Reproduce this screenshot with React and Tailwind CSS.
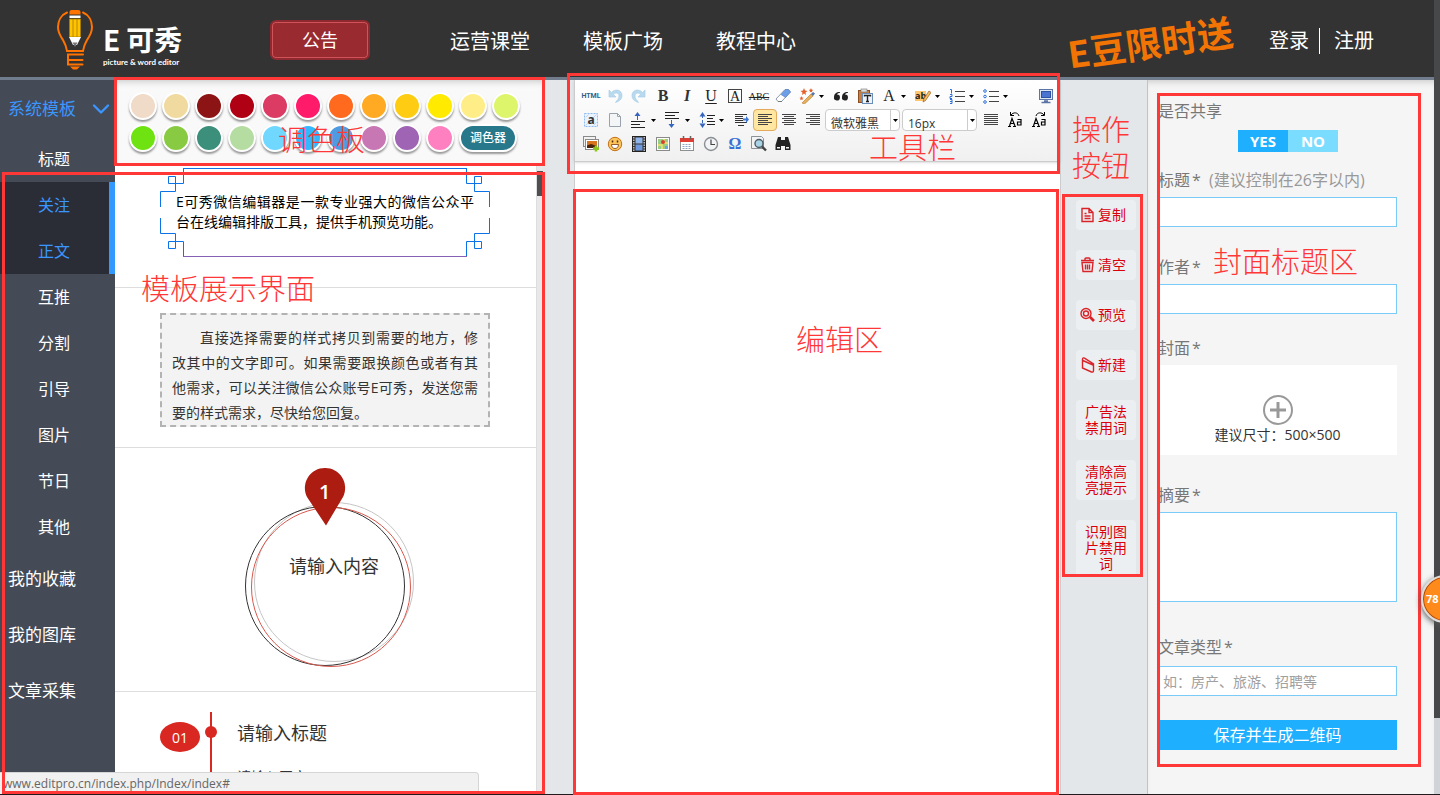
import { useState } from "react";
import { ChevronDown } from "lucide-react";

const ROW_ONE = [
  "#f0dac8", "#f0daa0", "#8c1414", "#b00014", "#dc3c64", "#ff1a6a",
  "#ff6a1e", "#ffaa22", "#ffcc14", "#ffea00", "#ffee88", "#ddf56a",
];
const ROW_TWO = [
  "#6fe312", "#88cb43", "#3c8f7a", "#b6dda1", "#70d7ff",
  "#33b8ff", "#4f9be2", "#c877b5", "#9f64b3", "#ff80c0",
];

const SUB_MENU = ["标题", "关注", "正文", "互推", "分割", "引导", "图片", "节日", "其他"];
const MAIN_MENU = ["我的收藏", "我的图库", "文章采集"];

/* ---------- toolbar glyphs, 16x16 ---------- */

const Lines = ({ rows }) => (
  <g stroke="#444" strokeWidth="1">
    {rows.map(([x1, x2, y]) => (
      <path key={y} d={`M${x1} ${y}.5H${x2}`} />
    ))}
  </g>
);

const GLYPHS = {
  undo: (
    <path d="M2 2v7h7L6.500 6.500C9 4 12 5 12 8s-2 4-3.500 6.500C13 13 15 11 15 7.500 15 2 8.500 0 4.500 4.500z" fill="#b9d9ef" stroke="#a3cbe6" strokeWidth=".6" />
  ),
  redo: (
    <path d="M14 2v7H7l2.500-2.500C7 4 4 5 4 8s2 4 3.500 6.500C3 13 1 11 1 7.500 1 2 7.500 0 11.500 4.500z" fill="#b9d9ef" stroke="#a3cbe6" strokeWidth=".6" />
  ),
  eraser: (
    <>
      <path d="M1 11 10 1.500h3.500l2 2.500-9 9.500H3z" fill="#fff" stroke="#8d9bb5" />
      <path d="M6 6.500 10.500 1.500H13.500l2 2.500-5 5.500z" fill="#6c9fe8" stroke="#5b82c4" strokeWidth=".6" />
      <path d="M3 13.500h4" stroke="#777" />
    </>
  ),
  magic: (
    <>
      <path d="m3 15 9-9 2 2-8.500 8z" fill="#e9b05a" stroke="#b0742c" strokeWidth=".6" />
      <path d="m12 6 2-2 2 1.500-2 2.500z" fill="#5577aa" />
      <path d="m5 0 1 2.500L8.500 3l-2 1.500.5 2.500-2-1.500L3 7l.5-2.500L1.500 3 4 2.500zM12 0l.6 1.600 1.600.4-1.200 1 .2 1.500L12 3.700l-1.200.8.200-1.500-1.200-1 1.600-.4zM2.500 8l.6 1.500 1.500.2-1.200 1 .3 1.500-1.200-.8-1.200.8.3-1.500-1.200-1L2 9.500z" fill="#e4612a" />
    </>
  ),
  quote: (
    <>
      <path d="M7 4C3 4 1 6 1 9a3 3 0 1 0 3-2.500C4.500 5.500 5.500 5 7 4.800z" fill="#222" />
      <path d="M15 4c-4 0-6 2-6 5a3 3 0 1 0 3-2.500c.5-1 1.500-1.500 3-1.700z" fill="#222" />
    </>
  ),
  paste: (
    <>
      <rect x="1.500" y="2.500" width="11" height="12" fill="#c67f45" stroke="#8b4e22" />
      <rect x="4" y="1" width="6" height="3" fill="#dedede" stroke="#777" strokeWidth=".6" />
      <rect x="5.500" y="5.500" width="10" height="10" fill="#eef3fa" stroke="#6b8db9" />
      <path d="M7.500 8.500v-1h6v1M10.500 7.500v6M9 13.500h3" stroke="#222" strokeWidth="1.400" fill="none" />
    </>
  ),
  pencil: <path d="m8 14 1-3.500L14 3l2 1.500-5.500 8z" fill="#efc15d" stroke="#a45c25" strokeWidth=".7" />,
  ol: (
    <>
      <path d="M6 3.500h10M6 8.500h10M6 13.500h10" stroke="#444" />
      <path d="M1 1.500h1.500v4M1 6.500h2v2H1v2h2M1 11.500h2v4H1M1 13.500h2" stroke="#2d6fd8" fill="none" />
    </>
  ),
  ul: (
    <>
      <path d="M6 3.500h10M6 8.500h10M6 13.500h10" stroke="#444" />
      <g stroke="#2d6fd8" fill="none">
        <circle cx="2" cy="3" r="1.300" />
        <circle cx="2" cy="8.500" r="1.300" />
        <circle cx="2" cy="14" r="1.300" />
      </g>
    </>
  ),
  screen: (
    <>
      <rect x="1.500" y="1.500" width="13" height="10" fill="#dfe7f3" stroke="#5a74a5" />
      <rect x="3.500" y="3.500" width="9" height="6" fill="#4a73d2" stroke="#2f52a5" />
      <path d="M6 13h4M3.500 14.500h9" stroke="#5a74a5" strokeWidth="1.500" />
    </>
  ),
  selectAll: (
    <>
      <rect x="1.500" y="1.500" width="13" height="13" fill="#eaf3ff" stroke="#8fbcf0" strokeDasharray="2 1" />
      <path d="M2.500 5.500 5.500 2.500M2.500 13.500 13.500 2.500M10.500 13.500 13.500 10.500" stroke="#bcd7f5" />
      <text x="4.500" y="12" fontSize="12" fontWeight="700" fill="#333">a</text>
    </>
  ),
  page: (
    <>
      <path d="M2.500 1.500h8l3 3v10h-11z" fill="#f3f5f7" stroke="#9aa3ad" />
      <path d="M10.500 1.500v3h3z" fill="#fff" stroke="#9aa3ad" />
    </>
  ),
  paraBefore: (
    <>
      <path d="M0 9.500h14M0 12.500h9M0 15.500h14" stroke="#222" />
      <path d="M6.500 8V3" stroke="#3565bd" />
      <path d="M3.500 4h6l-3-4z" fill="#3565bd" />
    </>
  ),
  paraAfter: (
    <>
      <path d="M0 .5h14M0 3.500h10M0 6.500h14" stroke="#222" />
      <path d="M6.500 8v5" stroke="#3565bd" />
      <path d="M3.500 12h6l-3 4z" fill="#3565bd" />
    </>
  ),
  lineHeight: (
    <>
      <path d="M8 3.500h8M8 6.500h6M8 9.500h8M8 12.500h8" stroke="#222" />
      <path d="M3.500 3v10" stroke="#3565bd" strokeDasharray="3 2" />
      <path d="M.5 4.500h6l-3-4.500zM.5 11.500h6l-3 4.500z" fill="#3565bd" />
    </>
  ),
  indent: (
    <>
      <path d="M2 2.500h12M2 4.500h8M2 6.500h8M2 8.500h8M2 10.500h12M5 13.500h6" stroke="#333" />
      <path d="M10 6.500h3v-2.500l3 3.500-3 3.500V8.500h-3z" fill="#3f77d6" />
    </>
  ),
  left: <Lines rows={[[1, 15, 2], [1, 11, 4], [1, 15, 6], [1, 11, 8], [1, 15, 10], [1, 11, 12]]} />,
  center: <Lines rows={[[1, 15, 2], [3, 13, 4], [1, 15, 6], [3, 13, 8], [1, 15, 10], [3, 13, 12]]} />,
  right: <Lines rows={[[1, 15, 2], [5, 15, 4], [1, 15, 6], [5, 15, 8], [1, 15, 10], [5, 15, 12]]} />,
  justify: <Lines rows={[[1, 15, 2], [1, 15, 4], [1, 15, 6], [1, 15, 8], [1, 15, 10], [1, 15, 12]]} />,
  picture: (
    <>
      <rect x=".5" y=".5" width="12" height="10" fill="#f2f2f2" stroke="#8a8a8a" />
      <rect x="2.500" y="3.500" width="13" height="10" fill="#fff" stroke="#8a8a8a" />
      <rect x="4" y="5" width="10" height="7" fill="#d8731e" />
      <path d="M4 12V9.500l4-1.500 6 2V12z" fill="#4a230d" />
      <path d="M13 9.500v6M10 12.500h6" stroke="#8cc71c" strokeWidth="2.600" />
    </>
  ),
  face: (
    <>
      <circle cx="8" cy="8" r="6.700" fill="#fbc55c" stroke="#c4701a" />
      <path d="M4.500 8.500h7c0 2.500-1.500 4-3.500 4s-3.500-1.500-3.500-4z" fill="#fff" stroke="#7a3c0c" strokeWidth=".8" />
      <path d="M5.500 4.500v2M10.500 4.500v2" stroke="#5b2b08" strokeWidth="1.500" />
    </>
  ),
  film: (
    <>
      <rect x="1.500" y=".5" width="13" height="15" fill="#333" stroke="#222" />
      <path d="M2.800 1v14M13.200 1v14" stroke="#ddd" strokeWidth="1.200" strokeDasharray="1.500 1" />
      <rect x="4.500" y="1.500" width="7" height="6" fill="#8fb4ea" />
      <rect x="4.500" y="8.500" width="7" height="6" fill="#6f99dc" />
    </>
  ),
  map: (
    <>
      <rect x="1.500" y="1.500" width="13" height="13" fill="#fff" stroke="#8a8a8a" />
      <rect x="3" y="3" width="10" height="10" fill="#9ccd85" />
      <path d="M3 9h4v4M9 3v4h4" stroke="#f4e46b" strokeWidth="1.500" fill="none" />
      <circle cx="8" cy="6" r="2" fill="#d8402c" />
      <path d="M10 10h3v3h-3z" fill="#6ea5e0" />
    </>
  ),
  calendar: (
    <>
      <rect x="1.500" y="2.500" width="13" height="12" fill="#fff" stroke="#8f8f8f" />
      <path d="M1 2h14v4H1z" fill="#e03c34" />
      <path d="M4.500 0v3.500M11.500 0v3.500" stroke="#666" strokeWidth="1.500" />
      <path d="M3.500 8.500h9M3.500 10.500h9M3.500 12.500h9" stroke="#8fa5c5" strokeDasharray="2 1" />
    </>
  ),
  clock: (
    <>
      <circle cx="8" cy="8" r="6.500" fill="#f2f4f6" stroke="#8b8f94" strokeWidth="1.400" />
      <path d="M8 3.500V8.500h4" stroke="#444" fill="none" strokeWidth="1.200" />
    </>
  ),
  preview: (
    <>
      <path d="M.5.500h10l2 2v10h-12z" fill="#f3f3f3" stroke="#8a9199" />
      <circle cx="8" cy="7.500" r="4" fill="#a8d4e6" stroke="#4e5a66" strokeWidth="1.400" />
      <path d="m11 10.500 4 4" stroke="#444" strokeWidth="2.400" />
    </>
  ),
  binoculars: (
    <path d="M3 1h3v3h4V1h3l2.500 8v5H10v-4H6v4H.5V9zM2 11h3v1.500H2zm9 0h3v1.500h-3z" fill="#222" fillRule="evenodd" />
  ),
};

function Glyph({ name }) {
  return (
    <svg viewBox="0 0 16 16" className="size-4 shrink-0" fill="none">
      {GLYPHS[name]}
    </svg>
  );
}

function Tool({ label, icon, arrow, active, children }) {
  return (
    <button
      type="button"
      aria-label={label}
      className={`flex h-6 shrink-0 items-center ${arrow ? "w-[34px]" : "w-6"}`}
    >
      <span
        className={`flex h-[22px] w-6 shrink-0 items-center justify-center rounded-sm ${
          active ? "border border-[#e3a95c] bg-[#ffe6a1]" : ""
        }`}
      >
        {icon ? <Glyph name={icon} /> : children}
      </span>
      {arrow && <Arrow />}
    </button>
  );
}

const Arrow = () => (
  <svg viewBox="0 0 5 3" className="h-[3px] w-[5px] shrink-0" fill="#000">
    <path d="M0 0h5L2.500 3z" />
  </svg>
);

function ToolSelect({ label, options }) {
  return (
    <div className="relative mr-0.5 h-[22px] w-[75px] shrink-0 rounded-sm border border-[#ccc] bg-white">
      <select
        aria-label={label}
        className="h-full w-full appearance-none bg-transparent pb-1 pl-[5px] text-[12px] leading-4 text-[#333]"
      >
        {options.map((o) => (
          <option key={o}>{o}</option>
        ))}
      </select>
      <span className="pointer-events-none absolute inset-y-0 right-0 flex w-[9px] items-center justify-center border-l border-[#ccc]">
        <Arrow />
      </span>
    </div>
  );
}

function CaseGlyph({ flip }) {
  return (
    <svg viewBox="0 0 16 16" className="size-4 shrink-0" fill="none" stroke="#000">
      <path d="M1 14.500h3M6 14.500h3M2.500 14 5 6.500 8 14M3.500 11.500h3.500" strokeWidth="1.200" />
      <path d="M10.500 7.500h3.500v5.500h-3.500v-3h3" strokeWidth="1.200" />
      <path d={flip ? "M5 4c1-4 6-4 8-1M13.500 0v3.500H10" : "M12 4c-1-4-6-4-8-1M3.500 0v3.500H7"} />
    </svg>
  );
}

function Toolbar() {
  return (
    <div className="flex h-[82px] flex-col border-b border-l border-[#ccc] bg-linear-to-b from-white to-[#f0f0f0] pt-1 pl-1 font-['Open_Sans','Noto_Sans_CJK_SC',sans-serif] shadow-sm">
      <div className="flex">
        <Tool label="HTML代码">
          <span className="font-['Roboto'] text-[7px] font-bold text-[#2d6187]">HTML</span>
        </Tool>
        <Tool label="后退" icon="undo" />
        <Tool label="前进" icon="redo" />
        <Tool label="粗体">
          <b className="font-['Liberation_Serif'] text-[16px] text-[#333]">B</b>
        </Tool>
        <Tool label="斜体">
          <b className="font-['Liberation_Serif'] text-[16px] text-[#333] italic">I</b>
        </Tool>
        <Tool label="下划线">
          <span className="font-['Liberation_Serif'] text-[16px] text-[#222] underline underline-offset-2">U</span>
        </Tool>
        <Tool label="边框">
          <span className="flex size-[14px] items-center justify-center border border-[#444] font-['Liberation_Serif'] text-[14px] text-[#222]">A</span>
        </Tool>
        <Tool label="删除线">
          <span className="font-['Liberation_Serif'] text-[10px] text-[#222] line-through">ABC</span>
        </Tool>
        <Tool label="清除格式" icon="eraser" />
        <Tool label="一键排版" icon="magic" arrow />
        <Tool label="引用" icon="quote" />
        <Tool label="粘贴文本" icon="paste" />
        <Tool label="文字颜色" arrow>
          <span className="font-['Liberation_Serif'] text-[16px] text-[#222]">A</span>
        </Tool>
        <Tool label="文字背景" arrow>
          <span className="relative flex size-4 items-center">
            <span className="bg-[#ffc56b] text-[9px] leading-[10px] font-bold text-[#222]">ab</span>
            <svg viewBox="0 0 16 16" className="absolute inset-0 size-4" fill="none">
              {GLYPHS.pencil}
            </svg>
          </span>
        </Tool>
        <Tool label="编号" icon="ol" arrow />
        <Tool label="项目符号" icon="ul" arrow />
        <div className="mr-0.5 ml-auto">
          <Tool label="全屏" icon="screen" />
        </div>
      </div>
      <div className="flex items-center">
        <Tool label="全选" icon="selectAll" />
        <Tool label="清空文档" icon="page" />
        <Tool label="段前距" icon="paraBefore" arrow />
        <Tool label="段后距" icon="paraAfter" arrow />
        <Tool label="行距" icon="lineHeight" arrow />
        <Tool label="缩进" icon="indent" />
        <Tool label="左对齐" icon="left" active />
        <Tool label="居中" icon="center" />
        <Tool label="右对齐" icon="right" />
        <ToolSelect label="字体" options={["微软雅黑", "宋体"]} />
        <ToolSelect label="字号" options={["16px", "18px"]} />
        <Tool label="两端对齐" icon="justify" />
        <Tool label="转大写">
          <CaseGlyph />
        </Tool>
        <Tool label="转小写">
          <CaseGlyph flip />
        </Tool>
      </div>
      <div className="flex">
        <Tool label="图片" icon="picture" />
        <Tool label="表情" icon="face" />
        <Tool label="视频" icon="film" />
        <Tool label="地图" icon="map" />
        <Tool label="日期" icon="calendar" />
        <Tool label="时间" icon="clock" />
        <Tool label="特殊字符">
          <b className="font-['Liberation_Serif'] text-[16px] text-[#3c6fd6]">Ω</b>
        </Tool>
        <Tool label="预览" icon="preview" />
        <Tool label="查找替换" icon="binoculars" />
      </div>
    </div>
  );
}

/* ---------- red guide frames and captions ---------- */

const Frame = ({ className }) => (
  <div className={`pointer-events-none absolute z-20 border-[3px] border-[#ff3737] ${className}`} />
);

const Caption = ({ className, children }) => (
  <p
    className={`pointer-events-none absolute z-20 font-['Noto_Sans_CJK_SC',sans-serif] text-[29px] leading-9 font-light whitespace-nowrap text-[#ff3737] ${className}`}
  >
    {children}
  </p>
);

/* ---------- header ---------- */

function Logo() {
  return (
    <a href="#" className="flex items-start">
      <svg viewBox="0 0 36 62" className="mt-[9px] h-[62px] w-9 shrink-0" fill="none">
        <g stroke="#ff7300" strokeWidth="2" strokeLinecap="round">
          <path d="M10 3.500C4 6 1 12 1 18c0 6 3 10 5 13 2 3.500 3.500 7 4 11h16c.5-4 2-7.500 4-11 2-3 5-7 5-13 0-6-3-12-9-14.500" />
          <path d="M26 45.500H11V51h14.500M11 51v4.500h14.500" />
        </g>
        <path d="M13 57.500h10l-3 3h-4z" fill="#ff7300" />
        <path d="M12.500 5.500V3q0-2 2-2h7q2 0 2 2v2.500z" fill="#ff7300" />
        <path d="M12.500 6.500h11V9h-11z" fill="#fff" />
        <path d="M12.500 10h11v18h-11z" fill="#ffc400" stroke="#a87c00" strokeWidth=".8" />
        <path d="M16 10v18M20 10v18" stroke="#a87c00" strokeWidth=".8" />
        <path d="M12 28h12l-4 8h-4z" fill="#fff" />
        <path d="M15.500 33.500h5L18 38z" fill="#777" />
      </svg>
      <span className="mt-[22px] ml-2.5 flex flex-col text-white">
        <span className="font-['Noto_Sans_CJK_SC',sans-serif] text-[28px] leading-[34px] font-bold whitespace-nowrap">
          <span className="mr-1.5">E</span>可秀
        </span>
        <span className="font-['Lato',sans-serif] text-[8px] leading-3 font-bold whitespace-nowrap">
          picture &amp; word editor
        </span>
      </span>
    </a>
  );
}

function Header() {
  return (
    <header className="flex h-20 shrink-0 border-b-[3px] border-[#717c8d] bg-[#333] pr-[60px] pl-[57px] text-white">
      <div className="w-[213px] shrink-0">
        <Logo />
      </div>
      <button
        type="button"
        className="mt-5 h-10 w-[100px] shrink-0 rounded-md border-2 border-[#8e2930] bg-[#992b30] text-[18px] leading-9 ring-1 ring-[#cf5459] ring-inset"
      >
        公告
      </button>
      <nav className="ml-20 flex h-[84px] shrink-0 items-center gap-[53px] text-[20px]">
        <a href="#">运营课堂</a>
        <a href="#">模板广场</a>
        <a href="#">教程中心</a>
      </nav>
      <div className="ml-auto flex h-[82px] shrink-0 items-center">
        <a
          href="#"
          className="mr-9 -rotate-8 font-['Noto_Sans_CJK_SC',sans-serif] text-[36px] leading-10 font-bold whitespace-nowrap text-[#f27405]"
        >
          E豆限时送
        </a>
        <a href="#" className="text-[20px]">登录</a>
        <span className="mr-3.5 ml-2.5 h-[26px] w-px bg-white" />
        <a href="#" className="text-[20px]">注册</a>
      </div>
    </header>
  );
}

/* ---------- left side ---------- */

function Sidebar() {
  return (
    <nav className="w-[115px] shrink-0 bg-[#444a56] text-white">
      <button
        type="button"
        className="flex h-14 w-full items-center justify-between pt-0.5 pl-2 text-[17px] text-[#3b96ff]"
      >
        系统模板
        <ChevronDown size={28} strokeWidth={2} />
      </button>
      {SUB_MENU.map((item) => {
        const active = item === "关注" || item === "正文";
        return (
          <a
            key={item}
            href="#"
            className={`flex h-[46px] items-center pl-[38px] text-[16px] ${
              active ? "border-r-[6px] border-[#3399ff] bg-[#2a2d35] text-[#3b96ff]" : ""
            }`}
          >
            {item}
          </a>
        );
      })}
      {MAIN_MENU.map((item) => (
        <a key={item} href="#" className="flex h-14 items-center pt-0.5 pl-2 text-[17px]">
          {item}
        </a>
      ))}
    </nav>
  );
}

function Swatch({ color }) {
  return (
    <button
      type="button"
      aria-label={color}
      className="size-7 rounded-full border-2 border-white shadow-[0_2px_2px_#999]"
      style={{ backgroundColor: color }}
    />
  );
}

function Palette() {
  return (
    <div className="relative flex h-[85px] shrink-0 flex-col gap-1 bg-[#f9f9f9] pt-3 pl-3.5 shadow-[inset_0_6px_6px_-4px_#ccc]">
      <div className="flex gap-[5px]">
        {ROW_ONE.map((c) => (
          <Swatch key={c} color={c} />
        ))}
      </div>
      <div className="flex gap-[5px]">
        {ROW_TWO.map((c) => (
          <Swatch key={c} color={c} />
        ))}
        <button
          type="button"
          className="h-7 w-[58px] rounded-full border-2 border-white bg-[#28788c] text-[12px] font-medium text-white shadow-[0_2px_2px_#999]"
        >
          调色器
        </button>
      </div>
      <Frame className="-top-[3px] -right-0.5 -bottom-px -left-px" />
      <Caption className="top-10 left-[163px]">调色板</Caption>
    </div>
  );
}

// one corner of the ornamental border, reused for all four
const CORNER = "M23.5 0V15.500H8.500V8.500H15.500V23.500H.5V39";

function Templates() {
  return (
    <div className="flex min-h-0 flex-1">
      <div className="min-w-0 flex-1 overflow-hidden border-r border-[#ddd] bg-white">
        <div className="flex h-[123px] justify-center border-b border-[#ddd] pt-[3px] pr-px">
          <div className="relative h-[89px] w-[330px] px-4 pt-6">
            <svg viewBox="0 0 330 89" className="absolute inset-0 h-[89px] w-[330px]" fill="none" stroke="#0b72e7">
              <path d={CORNER} />
              <path d={CORNER} transform="matrix(-1 0 0 1 330 0)" />
              <path d={CORNER} transform="matrix(1 0 0 -1 0 89)" />
              <path d={CORNER} transform="matrix(-1 0 0 -1 330 89)" />
              <path d="M23 .5h284" />
              <path d="M23 88.500h284" stroke="#8560b5" />
            </svg>
            <p className="relative text-justify text-[14px] leading-5 text-black">
              E可秀微信编辑器是一款专业强大的微信公众平台在线编辑排版工具，提供手机预览功能。
            </p>
          </div>
        </div>

        <div className="flex justify-center border-b border-[#ddd] pt-[25px] pr-px pb-5">
          <p className="w-[330px] border-2 border-dashed border-[#b3b3b3] bg-[#f3f3f3] px-2.5 pt-2.5 text-justify indent-7 text-[14px] leading-[25px] text-[#333]">
            直接选择需要的样式拷贝到需要的地方，修改其中的文字即可。如果需要跟换颜色或者有其他需求，可以关注微信公众账号E可秀，发送您需要的样式需求，尽快给您回复。
          </p>
        </div>

        <div className="flex justify-center border-b border-[#ddd] pt-5 pr-px pb-[23px]">
          <div className="relative h-[200px] w-[330px]">
            <svg viewBox="0 0 330 200" className="h-[200px] w-[330px]" fill="none">
              <circle cx="174" cy="114" r="79.500" stroke="#c6c6c6" />
              <circle cx="165" cy="118" r="79.500" stroke="#333" />
              <circle cx="171" cy="119" r="79.500" stroke="#d9594e" />
              <path d="M165 0a20 20 0 0 1 18 29L166 57.500 147 29A20 20 0 0 1 165 0z" fill="#ad1c10" />
            </svg>
            <span className="absolute top-3 left-[159px] text-[20px] leading-6 font-semibold text-white">1</span>
            <p className="absolute top-[86px] left-[129px] text-[18px] leading-6 text-[#333]">请输入内容</p>
          </div>
        </div>

        <div className="flex justify-center pt-5 pr-px">
          <div className="flex w-[330px]">
            <span className="mt-2.5 flex h-[30px] w-10 items-center justify-center rounded-[50%] bg-[#d92822] text-[14px] text-white">
              01
            </span>
            <svg viewBox="0 0 12 120" className="ml-[5px] h-[120px] w-3" fill="#d92822">
              <path d="M5 0h2v120H5z" />
              <circle cx="6" cy="20" r="6" />
            </svg>
            <div className="ml-5 pt-[9px] text-[#333]">
              <h3 className="text-[18px] leading-6">请输入标题</h3>
              <p className="mt-5 text-[14px] leading-6">请输入正文</p>
            </div>
          </div>
        </div>
      </div>
      <div className="w-1.5 shrink-0 bg-[#e8e8e8] pt-1.5">
        <div className="h-[25px] bg-[#4f4f4f]" />
      </div>
    </div>
  );
}

/* ---------- right side ---------- */

const ACTION_ICONS = {
  复制: <path d="M2 1.500h7l4 4V14.500H2zM9 1.500v4h4M4.500 6.500h2M4.500 9h6M4.500 11.500h6" />,
  清空: (
    <path d="M1 3.500h13M5 3.500V2q0-1 1-1h3q1 0 1 1v1.500M2 5.500h11L12 14.500H3zM5.500 7.500v5M7.500 7.500v5M9.500 7.500v5" />
  ),
  预览: (
    <>
      <circle cx="6" cy="6.500" r="5" />
      <circle cx="6" cy="6.500" r="2.500" />
      <path d="m10 10 4 4" strokeWidth="2.600" />
    </>
  ),
  新建: <path d="M2.500 2v9l9 4q2 .5 2-1.500V7L4.500 1.200Q2.500.2 2.500 2.500q0 1 1.500 1.500l9 4" />,
};

function Actions() {
  return (
    <aside className="relative w-[87px] shrink-0 border-r border-[#bfc4c8] pt-[120px] pl-[15px]">
      <div className="flex w-[60px] flex-col gap-5 text-[14px] leading-4 text-[#d9000b]">
        {Object.keys(ACTION_ICONS).map((name) => (
          <button
            key={name}
            type="button"
            className="flex h-[30px] items-center gap-0.5 rounded-sm bg-[#eceff1] pl-1"
          >
            <svg viewBox="0 0 16 16" className="size-4 shrink-0" fill="none" stroke="#d92329" strokeWidth="1.400">
              {ACTION_ICONS[name]}
            </svg>
            {name}
          </button>
        ))}
        {["广告法禁用词", "清除高亮提示", "识别图片禁用词"].map((name) => (
          <button key={name} type="button" className="rounded-sm bg-[#eceff1] px-2 py-1">
            {name}
          </button>
        ))}
      </div>
      <Frame className="top-[114px] right-1 left-px h-[383px]" />
      <Caption className="top-[30px] left-[11px]">
        操作
        <br />
        按钮
      </Caption>
    </aside>
  );
}

const FIELD = "block w-full border border-[#7acbf7] bg-white px-1 text-[14px] text-[#333] placeholder:text-[#a0a0a0]";

function Label({ id, children, className }) {
  return (
    <label htmlFor={id} className={`block text-[16px] leading-6 text-[#777] ${className}`}>
      {children}
    </label>
  );
}

const Star = () => <span className="ml-0.5 text-[16px]">*</span>;

function ArticleForm() {
  const [shared, setShared] = useState(true);

  return (
    <form className="relative w-[286px] shrink-0 bg-[#f5f5f5] pt-[19px] pr-[37px] pl-2.5 shadow-[inset_0_6px_6px_-4px_#ccc]">
      <p className="text-[16px] leading-6 text-[#777]">是否共享</p>
      <div className="mt-[7px] ml-20 flex text-[15px] leading-[22px] font-bold text-white">
        <button
          type="button"
          aria-pressed={shared}
          onClick={() => setShared(true)}
          className="h-[22px] w-[50px] bg-[#1fafff]"
        >
          YES
        </button>
        <button
          type="button"
          aria-pressed={!shared}
          onClick={() => setShared(false)}
          className="h-[22px] w-[50px] bg-[#7addff]"
        >
          NO
        </button>
      </div>

      <Label id="title" className="mt-4 mb-[5px]">
        标题
        <Star /> <span className="ml-1 text-[#999]">(建议控制在26字以内)</span>
      </Label>
      <input id="title" type="text" className={`h-[30px] ${FIELD}`} />

      <Label id="author" className="mt-7 mb-[5px]">
        作者
        <Star />
      </Label>
      <input id="author" type="text" className={`h-[30px] ${FIELD}`} />

      <Label id="cover" className="mt-[22px] mb-[5px]">
        封面
        <Star />
      </Label>
      <button
        id="cover"
        type="button"
        className="flex h-[90px] w-full flex-col items-center bg-white pt-[30px] text-[14px] leading-5 text-[#333]"
      >
        <svg viewBox="0 0 30 30" className="size-[30px] shrink-0" fill="none" stroke="#999">
          <circle cx="15" cy="15" r="14" strokeWidth="2" />
          <path d="M7 15h16M15 7v16" strokeWidth="3" />
        </svg>
        建议尺寸：500×500
      </button>

      <Label id="summary" className="mt-7 mb-[5px]">
        摘要
        <Star />
      </Label>
      <textarea id="summary" className={`h-[90px] resize-none ${FIELD}`} />

      <Label id="kind" className="mt-[33px] mb-[7px]">
        文章类型
        <Star />
      </Label>
      <input id="kind" type="text" placeholder="如：房产、旅游、招聘等" className={`h-[30px] ${FIELD}`} />

      <button type="submit" className="mt-6 h-[30px] w-full bg-[#1fafff] text-[16px] leading-[30px] text-white">
        保存并生成二维码
      </button>

      <Frame className="top-[13px] right-[13px] left-[9px] h-[674px]" />
      <Caption className="top-[162px] left-[65px]">封面标题区</Caption>
    </form>
  );
}

export default function App() {
  return (
    <div className="relative flex h-screen overflow-hidden bg-[#e3e7ea] font-['Open_Sans','Noto_Sans_CJK_SC',sans-serif]">
      <div className="flex min-w-0 flex-1 flex-col">
        <Header />
        <main className="flex min-h-0 flex-1">
          <div className="relative mr-[31px] flex shrink-0">
            <Sidebar />
            <div className="flex w-[428px] flex-col">
              <Palette />
              <Templates />
            </div>
            <Frame className="top-[92px] -right-0.5 bottom-px left-0.5" />
            <Caption className="top-[189px] left-[141px]">模板展示界面</Caption>
          </div>

          <section className="relative flex min-w-0 flex-1 flex-col border-r border-[#ccc] bg-white">
            <Toolbar />
            <div className="flex-1 border-l border-[#ccc] outline-none" contentEditable suppressContentEditableWarning />
            <Frame className="-top-[7px] right-0 -left-[7px] h-[101px]" />
            <Frame className="top-[109px] right-px bottom-0 -left-px" />
            <Caption className="top-12 left-[295px]">工具栏</Caption>
            <Caption className="top-60 left-[222px]">编辑区</Caption>
          </section>

          <Actions />
          <ArticleForm />
        </main>
      </div>

      {/* page scrollbar */}
      <div className="w-1.5 shrink-0 bg-[#d0d4d8]">
        <div className="h-[718px] bg-[#474849]" />
      </div>

      {/* browser status bubble */}
      <div className="absolute bottom-px left-0 z-10 h-[22px] w-[479px] rounded-tr-sm border-t border-r border-[#d5d5d5] bg-[#f1f1f1] pl-[3px] text-[12px] leading-[21px] text-[#666]">
        www.editpro.cn/index.php/Index/index#
      </div>
      <div className="absolute inset-x-0 bottom-0 h-px bg-[#221a1c]" />

      {/* floating helper badge */}
      <button
        type="button"
        className="absolute top-[575px] -right-[29px] z-30 size-12 rounded-full border-2 border-[#ddd] bg-[#ff8a1c] pl-[3px] text-left text-[11px] font-bold text-white shadow-[0_2px_6px_#555] ring-1 ring-[#b04a08] ring-inset"
      >
        78
      </button>
    </div>
  );
}
